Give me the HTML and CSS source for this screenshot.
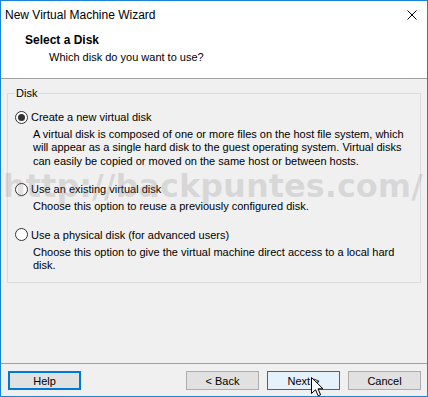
FILE: index.html
```html
<!DOCTYPE html>
<html lang="en">
<head>
    <meta charset="UTF-8">
    <title>New Virtual Machine Wizard</title>
    <link rel="stylesheet" href="styles.css">
</head>
<body>
    <div class="window">
        <div class="header">
            <div class="titlebar">
                <span class="title">New Virtual Machine Wizard</span>
                <svg class="close" width="10" height="10" viewBox="0 0 10 10">
                    <path d="M0.5 0.5 L9.5 9.5 M9.5 0.5 L0.5 9.5" stroke="#000" stroke-width="1" fill="none"/>
                </svg>
            </div>
            <div class="heading">Select a Disk</div>
            <div class="subheading">Which disk do you want to use?</div>
        </div>

        <div class="content">
            <fieldset class="group">
                <legend>Disk</legend>
                <div class="option first">
                    <div class="choice"><span class="radio checked"></span>Create a new virtual disk</div>
                    <p class="desc">A virtual disk is composed of one or more files on the host file system, which<br>will appear as a single hard disk to the guest operating system. Virtual disks<br>can easily be copied or moved on the same host or between hosts.</p>
                </div>
                <div class="option">
                    <div class="choice"><span class="radio"></span>Use an existing virtual disk</div>
                    <p class="desc">Choose this option to reuse a previously configured disk.</p>
                </div>
                <div class="option">
                    <div class="choice"><span class="radio"></span>Use a physical disk (for advanced users)</div>
                    <p class="desc">Choose this option to give the virtual machine direct access to a local hard<br>disk.</p>
                </div>
            </fieldset>
            <div class="watermark">http://backpuntes.com/</div>
        </div>

        <div class="footer">
            <button class="btn help">Help</button>
            <button class="btn back">&lt; Back</button>
            <button class="btn next">Next &gt;
                <svg class="cursor" width="13" height="20" viewBox="0 0 13 20">
                    <path d="M0.5 0.5 L0.5 16.5 L4.5 12.7 L7.2 18.8 L9.6 17.8 L7 11.8 L12 11.8 Z" fill="#fff" stroke="#000" stroke-width="1" stroke-linejoin="miter"/>
                </svg>
            </button>
            <button class="btn">Cancel</button>
        </div>
    </div>
</body>
</html>
```

FILE: styles.css
```css
* {
    margin: 0;
    padding: 0;
    box-sizing: border-box;
}
body {
    font-family: "Liberation Sans", Arial, sans-serif;
    font-size: 11px;
    color: #000;
    background: #f0f0f0;
}
.window {
    width: 428px;
    height: 397px;
    border: 1px solid #1883d7;
    display: flex;
    flex-direction: column;
    background: #f0f0f0;
}

/* header */
.header {
    height: 78px;
    background: #fff;
    border-bottom: 1px solid #a0a0a0;
}
.titlebar {
    height: 27px;
    display: flex;
    align-items: center;
    justify-content: space-between;
    padding: 0 10px 0 4px;
}
.title {
    font-size: 12px;
}
.close {
    display: block;
}
.heading {
    margin-top: 5px;
    padding-left: 24px;
    font-size: 12px;
    font-weight: bold;
    line-height: 14px;
}
.subheading {
    margin-top: 3px;
    padding-left: 48px;
    line-height: 14px;
}

/* content */
.content {
    flex: 1;
    position: relative;
}
.group {
    margin: 7px 6px 0 6px;
    padding: 0 6px 10px 7px;
    border: 1px solid #dcdcdc;
}
.group legend {
    padding: 0 1px;
    line-height: 14px;
}
.option {
    margin-top: 14px;
}
.option.first {
    margin-top: 10px;
}
.choice {
    display: flex;
    align-items: center;
    height: 14px;
}
.radio {
    width: 13px;
    height: 13px;
    border: 1px solid #333;
    border-radius: 50%;
    background: #fff;
    margin-right: 3px;
    display: flex;
    align-items: center;
    justify-content: center;
}
.radio.checked::after {
    content: "";
    width: 7px;
    height: 7px;
    border-radius: 50%;
    background: #333;
}
.desc {
    margin-top: 4px;
    padding-left: 18px;
    line-height: 13.4px;
    white-space: nowrap;
}
.watermark {
    position: absolute;
    top: 91px;
    left: 2px;
    font-family: "DejaVu Sans", sans-serif;
    font-weight: bold;
    font-size: 32px;
    line-height: 32px;
    color: rgba(128, 128, 128, 0.22);
    white-space: nowrap;
    pointer-events: none;
}

/* footer */
.footer {
    border-top: 1px solid #a0a0a0;
    padding: 7px 6px 6px 7px;
    display: flex;
    gap: 8px;
}
.btn {
    width: 73px;
    height: 19px;
    font-family: "Liberation Sans", Arial, sans-serif;
    font-size: 11px;
    color: #000;
    background: #e1e1e1;
    border: 1px solid #adadad;
    position: relative;
}
.btn.help {
    border: 2px solid #0078d7;
}
.btn.back {
    margin-left: auto;
}
.btn.next {
    background: #e5f1fb;
    border-color: #0078d7;
}
.cursor {
    position: absolute;
    left: 43px;
    top: 5px;
}
```
